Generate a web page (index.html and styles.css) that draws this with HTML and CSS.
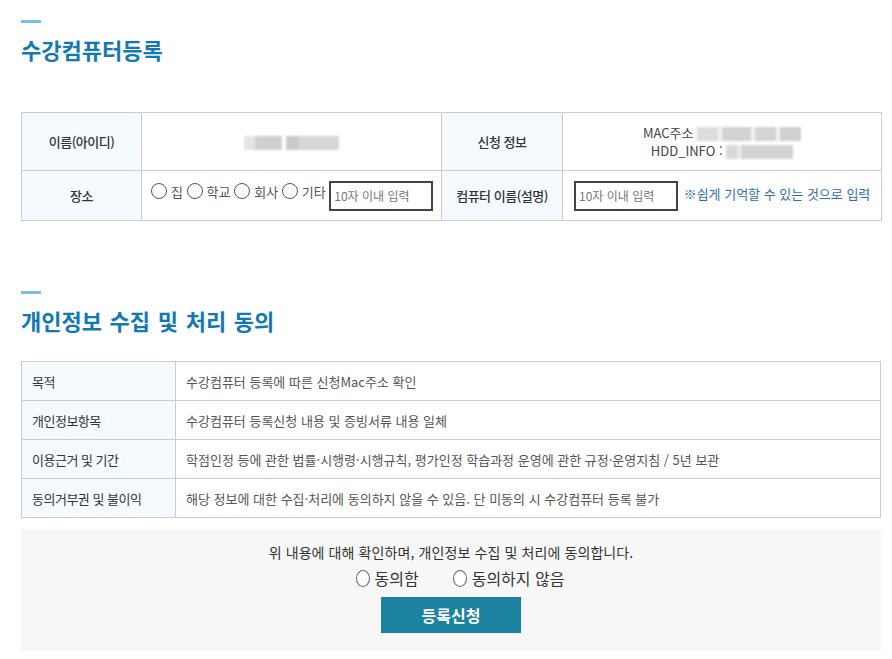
FILE: index.html
```html
<!DOCTYPE html>
<html lang="ko">
<head>
<meta charset="utf-8">
<title>수강컴퓨터등록</title>
<link rel="stylesheet" href="styles.css">
</head>
<body>
<div class="page">
  <section class="section first">
    <div class="bar"></div>
    <h2 class="title">수강컴퓨터등록</h2>
    <table class="reg">
      <colgroup><col class="c1"><col class="c2"><col class="c3"><col class="c4"></colgroup>
      <tr class="r1">
        <th>이름(아이디)</th>
        <td class="center"><span class="blur b-name"></span></td>
        <th>신청 정보</th>
        <td class="center info">
          <div>MAC주소 <span class="blur b-mac"></span></div>
          <div>HDD_INFO : <span class="blur b-hdd"></span></div>
        </td>
      </tr>
      <tr class="r2">
        <th>장소</th>
        <td class="place">
          <label class="opt"><input type="radio" name="place" class="radio"> 집</label>
          <label class="opt"><input type="radio" name="place" class="radio"> 학교</label>
          <label class="opt"><input type="radio" name="place" class="radio"> 회사</label>
          <label class="opt"><input type="radio" name="place" class="radio"> 기타</label>
          <input type="text" class="txt" placeholder="10자 이내 입력">
        </td>
        <th>컴퓨터 이름(설명)</th>
        <td class="pcname">
          <input type="text" class="txt" placeholder="10자 이내 입력">
          <span class="hint">※쉽게 기억할 수 있는 것으로 입력</span>
        </td>
      </tr>
    </table>
  </section>

  <section class="section second">
    <div class="bar"></div>
    <h2 class="title">개인정보 수집 및 처리 동의</h2>
    <table class="agree">
      <colgroup><col class="a1"><col class="a2"></colgroup>
      <tr><th>목적</th><td>수강컴퓨터 등록에 따른 신청Mac주소 확인</td></tr>
      <tr><th>개인정보항목</th><td>수강컴퓨터 등록신청 내용 및 증빙서류 내용 일체</td></tr>
      <tr><th>이용근거 및 기간</th><td>학점인정 등에 관한 법률·시행령·시행규칙, 평가인정 학습과정 운영에 관한 규정·운영지침 / 5년 보관</td></tr>
      <tr><th>동의거부권 및 불이익</th><td>해당 정보에 대한 수집·처리에 동의하지 않을 수 있음. 단 미동의 시 수강컴퓨터 등록 불가</td></tr>
    </table>
    <div class="confirm">
      <p class="confirm-text">위 내용에 대해 확인하며, 개인정보 수집 및 처리에 동의합니다.</p>
      <div class="choices">
        <label class="choice"><input type="radio" name="agree" class="radio oval">동의함</label>
        <label class="choice"><input type="radio" name="agree" class="radio oval">동의하지 않음</label>
      </div>
      <button type="button" class="submit">등록신청</button>
    </div>
  </section>
</div>
</body>
</html>
```
FILE: styles.css
```css
* { box-sizing: border-box; }
html, body { margin: 0; padding: 0; background: #fff; }
body {
  font-family: "Noto Sans CJK KR", "Noto Sans", sans-serif;
  color: #333;
  font-size: 13px;
}
.page { width: 860px; margin-left: 21px; }
.section.first { padding-top: 20px; }
.section.second { padding-top: 70px; }
.bar { width: 20px; height: 3px; background: #7cbde3; }
.title {
  margin: 10px 0 0 0;
  font-size: 22px;
  line-height: 32px;
  font-weight: 700;
  color: #1279b3;
  letter-spacing: 0;
  word-spacing: 1.5px;
}
.section.first .title { margin-bottom: 47px; }
.section.second .title { margin-bottom: 25px; }

table { border-collapse: collapse; width: 860px; table-layout: fixed; }
th, td { border: 1px solid #ccc; font-size: 13px; }
th { background: #f5faff; font-weight: 500; color: #333; letter-spacing: -0.5px; }
td { color: #555; }

.reg .c1 { width: 120px; }
.reg .c2 { width: 300px; }
.reg .c3 { width: 121px; }
.reg .c4 { width: 319px; }
.reg .r1 { height: 58px; }
.reg .r2 { height: 50px; }
.reg th { text-align: center; }
.center { text-align: center; }
.info { line-height: 18px; color: #444; }

.blur { display: inline-block; vertical-align: middle; height: 14px; filter: blur(1.2px); }
.b-name {
  width: 95px;
  background:
    linear-gradient(to right, #e4e4e4 0 12%, #cfcfcf 12% 40%, #fff 40% 44%, #cacaca 44% 58%, #d6d6d6 58% 100%);
}
.b-mac {
  width: 104px;
  background: linear-gradient(to right, #dcdcdc 0 20%, #f2f2f2 20% 24%, #d2d2d2 24% 52%, #f2f2f2 52% 56%, #d4d4d4 56% 76%, #f2f2f2 76% 80%, #d0d0d0 80% 100%);
}
.b-hdd {
  width: 67px;
  background: linear-gradient(to right, #dadada 0 18%, #eeeeee 18% 22%, #d4d4d4 22% 100%);
}

.place { padding-left: 9px; white-space: nowrap; color: #555; }
.opt { display: inline-flex; align-items: center; gap: 4px; margin-right: 0; }
.radio {
  -webkit-appearance: none;
  appearance: none;
  width: 16px; height: 16px;
  margin: 0;
  border: 1px solid #555;
  border-radius: 50%;
  background: #fff;
  vertical-align: middle;
}
.txt {
  width: 104px; height: 30px;
  border: 2px solid #444;
  padding: 0 3px;
  font-family: "Noto Sans CJK KR", sans-serif;
  font-size: 12px;
  vertical-align: middle;
  margin-left: 0;
}
.txt::placeholder { color: #777; }
.pcname { padding-left: 11px; white-space: nowrap; }
.hint { color: #2f6db5; margin-left: 2px; font-size: 13px; }

.agree .a1 { width: 154px; }
.agree tr { height: 39px; }
.agree th { text-align: left; padding-left: 10px; font-weight: 400; }
.agree td { padding-left: 10px; }

.confirm {
  margin-top: 11px;
  background: #f7f7f7;
  height: 122px;
  display: flex;
  flex-direction: column;
  align-items: center;
  padding-top: 13px;
}
.confirm-text { margin: 0; font-size: 14px; letter-spacing: 0.1px; color: #333; line-height: 20px; }
.choices { display: flex; gap: 34px; margin-top: 6px; height: 20px; align-items: center; padding-left: 18px; }
.choice { display: inline-flex; align-items: center; gap: 5px; font-size: 16px; color: #333; }
.radio.oval { width: 14px; height: 17px; border-color: #666; }
.submit {
  margin-top: 9px;
  width: 140px; height: 36px;
  background: #1b82a0;
  color: #fff;
  border: 0;
  font-family: "Noto Sans CJK KR", sans-serif;
  font-size: 16px;
  font-weight: 700;
}
```
